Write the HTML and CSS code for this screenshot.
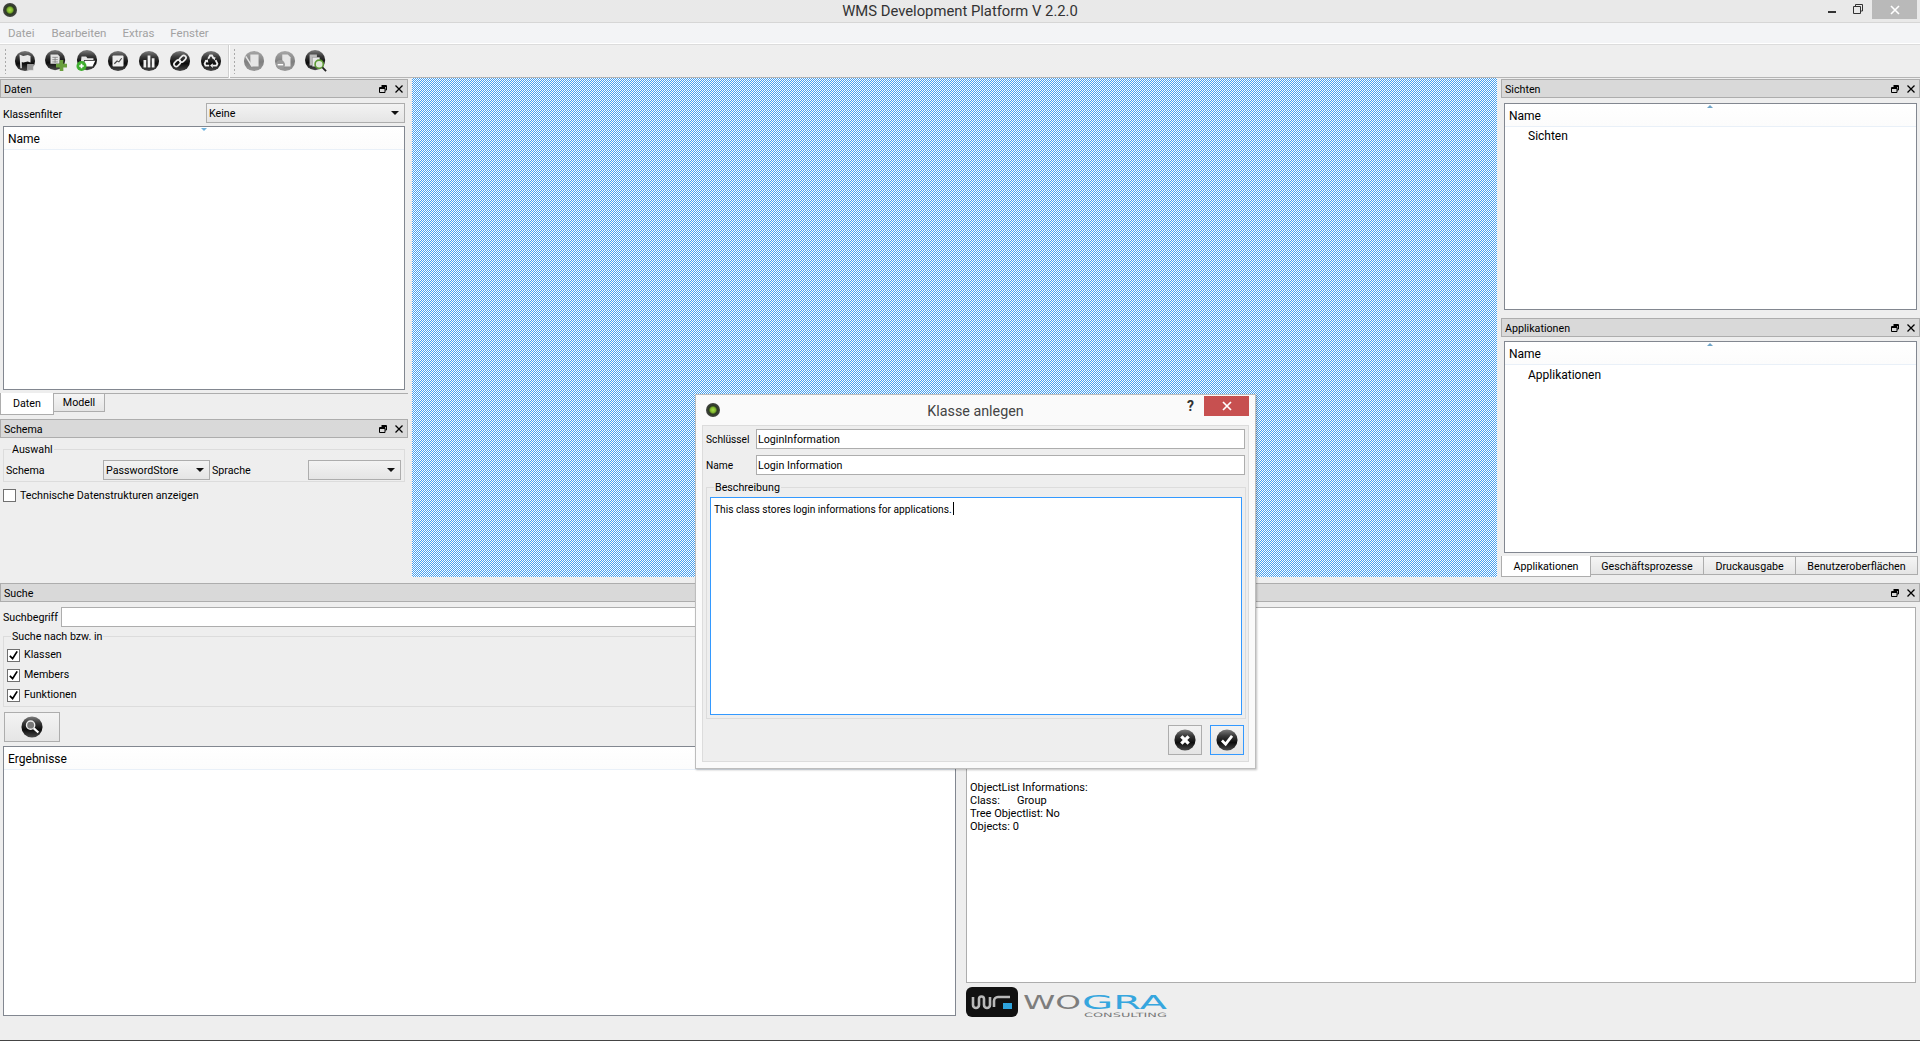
FILE: index.html
```html
<!DOCTYPE html>
<html lang="de">
<head>
<meta charset="utf-8">
<title>WMS Development Platform V 2.2.0</title>
<link rel="stylesheet" href="styles.css">
</head>
<body>
<svg class="defs" width="0" height="0" aria-hidden="true">
  <defs>
    <linearGradient id="ball" x1="0" y1="0" x2="0" y2="1">
      <stop offset="0" stop-color="#7d7d7d"/><stop offset=".3" stop-color="#3a3a3a"/><stop offset=".62" stop-color="#0c0c0c"/><stop offset="1" stop-color="#4a4a4a"/>
    </linearGradient>
    <linearGradient id="ballOff" x1="0" y1="0" x2="0" y2="1">
      <stop offset="0" stop-color="#a8a8a8"/><stop offset=".55" stop-color="#7f7f7f"/><stop offset="1" stop-color="#9a9a9a"/>
    </linearGradient>
    <radialGradient id="led" cx=".5" cy=".5" r=".5">
      <stop offset="0" stop-color="#a8e04a"/><stop offset=".38" stop-color="#7fb52d"/><stop offset=".6" stop-color="#2c3a22"/><stop offset="1" stop-color="#444"/>
    </radialGradient>
    <symbol id="i-flag" viewBox="0 0 24 24"><circle cx="12" cy="12" r="11" fill="url(#ball)"/><path d="M6 5l4 1.500 5-1 3 1v7l-3-1-5 1-1.500-.5V20H7z" fill="#e8e8e8"/><rect x="15" y="16" width="6" height="6" fill="#9a9a9a" stroke="#ddd" stroke-width=".6"/></symbol>
    <symbol id="i-newclass" viewBox="0 0 24 24"><circle cx="11" cy="11" r="11" fill="url(#ball)"/><path d="M6 5h8l2 2v8H6z" fill="#e4e4e4"/><path d="M8 8h6M8 10.500h6M8 13h6M11 8v6" stroke="#777" stroke-width=".8"/><path d="M16 11h4v4h4v4h-4v4h-4v-4h-4v-4h4z" fill="#6a9f3e"/></symbol>
    <symbol id="i-open" viewBox="0 0 24 24"><circle cx="12" cy="11" r="11" fill="url(#ball)"/><path d="M6 7h5l1.500 2H19v2H9l-2 5H5z" fill="#e6e6e6"/><path d="M9.500 11.800H21L18 18H7.500z" fill="#fff"/><circle cx="6" cy="17.500" r="5.500" fill="#3fae2f"/><path d="M3.500 17.500h5M6 15v5" stroke="#fff" stroke-width="1.800"/></symbol>
    <symbol id="i-chart" viewBox="0 0 24 24"><circle cx="12" cy="12" r="11" fill="url(#ball)"/><rect x="6" y="6" width="12" height="12" rx="1" fill="#eee"/><path d="M8 15l3-3 2 1 3-4" fill="none" stroke="#444" stroke-width="1.200"/></symbol>
    <symbol id="i-bars" viewBox="0 0 24 24"><circle cx="12" cy="12" r="11" fill="url(#ball)"/><path d="M6 11h3v8H6zM10.500 6h3v13h-3zM15 9h3v10h-3z" fill="#f0f0f0"/></symbol>
    <symbol id="i-link" viewBox="0 0 24 24"><circle cx="12" cy="12" r="11" fill="url(#ball)"/><g fill="none" stroke="#eee" stroke-width="1.800"><rect x="5" y="12" width="8" height="5" rx="2.500" transform="rotate(-45 9 14.500)"/><rect x="11" y="7" width="8" height="5" rx="2.500" transform="rotate(-45 15 9.500)"/></g></symbol>
    <symbol id="i-recycle" viewBox="0 0 24 24"><circle cx="12" cy="12" r="11" fill="url(#ball)"/><g fill="none" stroke="#eee" stroke-width="2"><path d="M9 9.500l2-3.500h2l2 3.500"/><path d="M17 11l2 4-1 2h-4"/><path d="M10 17H6l-1-2 2-4"/></g><path d="M13 8l4 0-1 3.500zM14 14.500v5l-3-2.500zM5 12l3.500-2 .5 4z" fill="#eee"/></symbol>
    <symbol id="i-note" viewBox="0 0 24 24"><circle cx="12" cy="12" r="11" fill="url(#ballOff)"/><path d="M8 5h9v13H10l-2-2z" fill="#e6e6e6"/><path d="M3 7l7 11" stroke="#e6e6e6" stroke-width="1.600"/></symbol>
    <symbol id="i-noteminus" viewBox="0 0 24 24"><circle cx="12" cy="12" r="11" fill="url(#ballOff)"/><path d="M9 5h6l3 3v10H9z" fill="#e6e6e6"/><circle cx="7" cy="16" r="5" fill="#9a9a9a"/><path d="M4 16h6" stroke="#fff" stroke-width="1.600"/></symbol>
    <symbol id="i-copyfind" viewBox="0 0 24 24"><circle cx="11" cy="11" r="11" fill="url(#ball)"/><path d="M5 5h8v3H8v9H5z" fill="#bbb"/><path d="M8 8h8v10H8z" fill="#e8e8e8"/><circle cx="15.500" cy="15.500" r="4.500" fill="#dfe8d8" stroke="#5d9a35" stroke-width="1.800"/><path d="M19 19l4 4" stroke="#222" stroke-width="2"/></symbol>
    <symbol id="i-search" viewBox="0 0 24 24"><circle cx="12" cy="12" r="11.500" fill="url(#ball)"/><circle cx="10.500" cy="10" r="4.500" fill="#777" stroke="#eee" stroke-width="1.500"/><path d="M14 13.500l5 4.500" stroke="#fff" stroke-width="2.400"/></symbol>
    <symbol id="i-cancel" viewBox="0 0 24 24"><circle cx="12" cy="12" r="11.500" fill="url(#ball)"/><path d="M8 8l8 8M16 8l-8 8" stroke="#fff" stroke-width="3.600"/></symbol>
    <symbol id="i-ok" viewBox="0 0 24 24"><circle cx="12" cy="12" r="11.500" fill="url(#ball)"/><path d="M6.500 12.500l4 4 7-9" fill="none" stroke="#fff" stroke-width="3"/></symbol>
    <symbol id="i-led" viewBox="0 0 14 14"><circle cx="7" cy="7" r="7" fill="url(#led)"/></symbol>
    <symbol id="i-float" viewBox="0 0 8 8"><path d="M2.500.5h5v4.500H6M.5 2.500h5.500v5H.5zM.5 3.500h5.500M2.500 1.500h5" fill="none" stroke="#000" stroke-width="1"/></symbol>
    <symbol id="i-close" viewBox="0 0 8 8"><path d="M.5.5l7 7M7.500.5l-7 7" stroke="#000" stroke-width="1.300"/></symbol>
    <symbol id="i-check" viewBox="0 0 12 12"><path d="M2 6.500l3 3 5-8" fill="none" stroke="#000" stroke-width="1.900"/></symbol>
  </defs>
</svg>

<div class="app">
  <header class="titlebar">
    <svg class="led"><use href="#i-led"/></svg>
    <span class="title-text">WMS Development Platform V 2.2.0</span>
    <div class="win-controls">
      <span class="win-min"></span>
      <svg class="win-restore" viewBox="0 0 10 10"><path d="M2.500 2.500V.5h7v6.500H7.500M.5 2.500h7v7h-7z" fill="none" stroke="#333"/></svg>
      <span class="win-close"><svg class="win-x" viewBox="0 0 10 10"><path d="M1 1l8 8M9 1l-8 8" stroke="#fff" stroke-width="1.600"/></svg></span>
    </div>
  </header>

  <nav class="menubar">
    <span class="menu m1">Datei</span><span class="menu m2">Bearbeiten</span><span class="menu m3">Extras</span><span class="menu m4">Fenster</span>
  </nav>

  <div class="toolbar">
    <span class="grip"></span>
    <div class="tool-group">
      <svg class="tool"><use href="#i-flag"/></svg>
      <svg class="tool"><use href="#i-newclass"/></svg>
      <svg class="tool"><use href="#i-open"/></svg>
      <svg class="tool"><use href="#i-chart"/></svg>
      <svg class="tool"><use href="#i-bars"/></svg>
      <svg class="tool"><use href="#i-link"/></svg>
      <svg class="tool"><use href="#i-recycle"/></svg>
    </div>
    <span class="tool-sep"></span>
    <span class="grip"></span>
    <div class="tool-group">
      <svg class="tool"><use href="#i-note"/></svg>
      <svg class="tool"><use href="#i-noteminus"/></svg>
      <svg class="tool"><use href="#i-copyfind"/></svg>
    </div>
  </div>

  <main class="top">
    <aside class="left-col">
      <div class="dock-head"><span>Daten</span><span class="dock-btns"><svg class="dock-ico"><use href="#i-float"/></svg><svg class="dock-ico"><use href="#i-close"/></svg></span></div>
      <div class="filter-row">
        <label class="filter-label">Klassenfilter</label>
        <div class="combo combo-filter"><span>Keine</span><i class="arrow"></i></div>
      </div>
      <div class="tree tree-daten">
        <div class="tree-head"><span>Name</span><i class="sort sort-down"></i></div>
      </div>
      <div class="tabbar tabs-left">
        <span class="tab tab-active tab-daten">Daten</span><span class="tab tab-modell">Modell</span>
      </div>
      <div class="dock-head schema-head"><span>Schema</span><span class="dock-btns"><svg class="dock-ico"><use href="#i-float"/></svg><svg class="dock-ico"><use href="#i-close"/></svg></span></div>
      <fieldset class="group group-auswahl">
        <legend>Auswahl</legend>
        <div class="schema-row">
          <span class="lbl-schema">Schema</span>
          <div class="combo combo-schema"><span>PasswordStore</span><i class="arrow"></i></div>
          <span class="lbl-sprache">Sprache</span>
          <div class="combo combo-sprache"><span></span><i class="arrow"></i></div>
        </div>
      </fieldset>
      <label class="check check-tech"><span class="box"></span>Technische Datenstrukturen anzeigen</label>
    </aside>

    <section class="mdi"></section>

    <aside class="right-col">
      <div class="dock-head"><span>Sichten</span><span class="dock-btns"><svg class="dock-ico"><use href="#i-float"/></svg><svg class="dock-ico"><use href="#i-close"/></svg></span></div>
      <div class="tree tree-sichten">
        <div class="tree-head"><span>Name</span><i class="sort sort-up"></i></div>
        <div class="tree-item item-sichten">Sichten</div>
      </div>
      <div class="dock-head apps-head"><span>Applikationen</span><span class="dock-btns"><svg class="dock-ico"><use href="#i-float"/></svg><svg class="dock-ico"><use href="#i-close"/></svg></span></div>
      <div class="tree tree-apps">
        <div class="tree-head"><span>Name</span><i class="sort sort-up"></i></div>
        <div class="tree-item">Applikationen</div>
      </div>
      <div class="tabs-right">
        <span class="tab tab-active tr1">Applikationen</span><span class="tab tr2">Geschäftsprozesse</span><span class="tab tr3">Druckausgabe</span><span class="tab tr4">Benutzeroberflächen</span>
      </div>
    </aside>
  </main>

  <section class="search-dock">
    <div class="dock-head"><span>Suche</span><span class="dock-btns"><svg class="dock-ico"><use href="#i-float"/></svg><svg class="dock-ico"><use href="#i-close"/></svg></span></div>
    <div class="search-body">
      <div class="search-left">
        <div class="term-row"><span class="term-label">Suchbegriff</span><div class="input term-input"></div></div>
        <fieldset class="group group-search">
          <legend>Suche nach bzw. in</legend>
          <label class="check"><span class="box"><svg class="tick"><use href="#i-check"/></svg></span>Klassen</label>
          <label class="check"><span class="box"><svg class="tick"><use href="#i-check"/></svg></span>Members</label>
          <label class="check"><span class="box"><svg class="tick"><use href="#i-check"/></svg></span>Funktionen</label>
        </fieldset>
        <button class="btn btn-search" type="button"><svg class="btn-ico"><use href="#i-search"/></svg></button>
        <div class="tree tree-results"><div class="tree-head"><span>Ergebnisse</span></div></div>
      </div>
      <div class="search-right">
        <div class="info-pane">
          <div>ObjectList Informations:</div>
          <div class="info-class"><span class="info-key">Class:</span>Group</div>
          <div>Tree Objectlist: No</div>
          <div>Objects: 0</div>
        </div>
        <div class="logo">
          <svg class="logo-mark" viewBox="0 0 52 30"><rect width="52" height="30" rx="6" fill="#111"/><path d="M7 10v8a3 3 0 0 0 6 0v-6a2.500 2.500 0 0 1 5 0v6a3 3 0 0 0 6 0v-8M28 20v-6a4 4 0 0 1 4-4h12" fill="none" stroke="#b9b9b9" stroke-width="2.600"/><rect x="37" y="16" width="9" height="6" fill="#2ea3dc"/></svg>
          <svg class="logo-word" viewBox="0 0 150 30">
            <text class="lw-gray" x="2" y="22" textLength="58" lengthAdjust="spacingAndGlyphs">WO</text>
            <text class="lw-blue" x="61" y="22" textLength="85" lengthAdjust="spacingAndGlyphs">GRA</text>
            <text class="lw-sub" x="63" y="30" textLength="83" lengthAdjust="spacingAndGlyphs">CONSULTING</text>
          </svg>
        </div>
      </div>
    </div>
  </section>
  <div class="bottom-line"></div>
</div>

<div class="dialog">
  <div class="dlg-title">
    <svg class="led dlg-led"><use href="#i-led"/></svg>
    <span class="dlg-caption">Klasse anlegen</span>
    <span class="dlg-help">?</span>
    <span class="dlg-close"><svg class="win-x" viewBox="0 0 10 10"><path d="M1 1l8 8M9 1l-8 8" stroke="#fff" stroke-width="1.700"/></svg></span>
  </div>
  <div class="dlg-client">
    <div class="form-row"><span class="form-label">Schlüssel</span><div class="input form-input">LoginInformation</div></div>
    <div class="form-row"><span class="form-label">Name</span><div class="input form-input">Login Information</div></div>
    <fieldset class="group group-desc">
      <legend>Beschreibung</legend>
      <div class="textarea">This class stores login informations for applications.<i class="caret"></i></div>
    </fieldset>
    <div class="dlg-actions">
      <button class="btn btn-dlg" type="button"><svg class="btn-ico"><use href="#i-cancel"/></svg></button>
      <button class="btn btn-dlg btn-default" type="button"><svg class="btn-ico"><use href="#i-ok"/></svg></button>
    </div>
  </div>
</div>
</body>
</html>
```

FILE: styles.css
```css
* { box-sizing: border-box; }
html, body { margin: 0; height: 100%; overflow: hidden; }
body { font-family: Roboto, "Noto Sans", sans-serif; font-size: 10.700px; color: #000; background: #eee; position: relative; }
.defs { position: absolute; }
.app { width: 1920px; height: 1041px; display: flex; flex-direction: column; }

/* window chrome */
.titlebar { height: 23px; flex: none; background: #e9e9e9; border-bottom: 1px solid #d6d6d6; position: relative; display: flex; align-items: flex-start; }
.led { width: 14px; height: 14px; margin: 3px 0 0 3px; }
.title-text { position: absolute; left: 0; right: 0; top: 1px; text-align: center; font-size: 14.800px; line-height: 20px; color: #333; }
.win-controls { position: absolute; right: 3px; top: 0; display: flex; align-items: flex-start; }
.win-min { width: 8px; height: 2px; background: #333; margin: 11px 17px 0 0; }
.win-restore { width: 10px; height: 10px; margin: 4px 9px 0 0; }
.win-close { width: 45px; height: 19px; background: #b9b9b9; display: flex; align-items: center; justify-content: center; }
.win-x { width: 10px; height: 10px; }

.menubar { height: 21px; flex: none; background: #f3f4f6; border-bottom: 1px solid #fff; display: flex; align-items: center; color: #a2a2a2; line-height: 20px; font-size: 11.500px; }
.m1 { margin-left: 8px; }
.m2 { margin-left: 17px; }
.m3 { margin-left: 16px; }
.m4 { margin-left: 16px; }

.toolbar { height: 34px; flex: none; background: #eee; border-top: 1px solid #dcdcdc; border-bottom: 1px solid #b5b5b5; display: flex; align-items: center; }
.grip { width: 3px; height: 26px; margin-left: 4px; background-image: radial-gradient(circle, #aaa 1px, transparent 1px); background-size: 3px 4px; }
.tool-group { display: flex; gap: 9px; margin-left: 7px; }
.tool { width: 22px; height: 22px; overflow: visible; }
.tool-sep { width: 1px; height: 33px; background: #d0d0d0; box-shadow: 1px 0 0 #fff; margin-left: 6px; }

/* main region */
.top { height: 505px; flex: none; display: flex; }
.left-col { width: 412px; flex: none; padding: 1px 4px 0 0; }
.mdi { width: 1085px; flex: none; height: 499px; background-color: #fff; background-image: conic-gradient(#45a0f0 25%, #fff 0 50%, #45a0f0 0 75%, #fff 0); background-size: 2px 2px; }
.right-col { flex: 1; padding: 1px 0 0 4px; }

.dock-head { height: 19px; background: #d9d9d9; border: 1px solid #adadad; display: flex; align-items: center; justify-content: space-between; padding: 0 0 0 3px; line-height: 17px; }
.dock-head > span:first-child { padding-top: 2px; }
.dock-btns { display: flex; gap: 8px; margin-right: 4px; }
.dock-ico { width: 8px; height: 8px; }

.filter-row { height: 28px; display: flex; align-items: center; justify-content: space-between; padding: 5px 3px 3px 3px; }
.filter-label { padding-top: 2px; }
.combo { height: 20px; border: 1px solid #adadad; background: linear-gradient(#f3f3f3, #e5e5e5); display: flex; align-items: center; justify-content: space-between; padding: 0 5px 0 2px; line-height: 18px; }
.combo > span { padding-top: 2px; }
.combo-filter { width: 199px; }
.arrow { width: 0; height: 0; border-left: 4px solid transparent; border-right: 4px solid transparent; border-top: 4px solid #111; margin-top: -1px; }

.tree { background: #fff; border: 1px solid #828790; position: relative; }
.tree-head { height: 23px; background: linear-gradient(#fff, #fcfcfc); border-bottom: 1px solid #e9f0f8; padding: 3px 0 0 4px; line-height: 19px; font-size: 12px; position: relative; }
.tree-item { padding: 1px 0 0 23px; line-height: 19px; font-size: 12px; }
.item-sichten { margin-top: -1px; }
.sort { position: absolute; top: 1px; width: 0; height: 0; border-left: 3.500px solid transparent; border-right: 3.500px solid transparent; }
.sort-down { left: 197px; border-top: 3px solid #6fb2de; }
.sort-up { left: 202px; border-bottom: 3px solid #6fa4c8; }
.tree-daten { width: 402px; height: 264px; margin-left: 3px; }

.tabbar { height: 30px; margin-top: 3px; border-top: 1px solid #adadad; display: flex; align-items: flex-start; width: 408px; }
.tab { background: linear-gradient(#f5f5f5, #e5e5e5); border: 1px solid #adadad; display: inline-flex; align-items: center; justify-content: center; height: 18px; line-height: 16px; }
.tab-active { background: #fff; height: 21px; padding-top: 1px; }
.tab-daten { width: 54px; border-top: 0; margin-top: -1px; height: 22px; }
.tab-modell { width: 51px; margin-top: -1px; border-left: 0; height: 19px; }
.schema-head { margin-top: -4px; }

.group { border: 1px solid #dcdcdc; margin: 0; padding: 0; min-width: 0; position: relative; }
.group legend { margin-left: 7px; padding: 0 1px; line-height: 16px; height: 14px; }
.group-auswahl { margin: 4px 3px 0 3px; width: 402px; height: 40px; }
.schema-row { display: flex; align-items: center; height: 20px; margin-top: 4px; }
.lbl-schema { width: 99px; padding: 1px 0 0 2px; }
.combo-schema { width: 107px; }
.lbl-sprache { width: 98px; padding: 1px 0 0 2px; }
.combo-sprache { width: 93px; }

.check { display: flex; align-items: center; gap: 4px; height: 20px; line-height: 14px; }
.box { width: 13px; height: 13px; border: 1px solid #707070; background: #fff; display: flex; align-items: center; justify-content: center; flex: none; }
.tick { width: 11px; height: 11px; }
.check-tech { margin: 4px 0 0 3px; }
.check-tech .box { margin-top: -2px; }

/* Tab strip right */
.tree-sichten { width: 413px; height: 207px; margin: 5px 0 0 3px; }
.apps-head { margin-top: 8px; }
.tree-apps { width: 413px; height: 212px; margin: 4px 0 0 3px; }
.tabs-right { display: flex; align-items: flex-start; margin-top: 3px; }
.tabs-right .tab { height: 19px; padding-top: 2px; }
.tabs-right .tab-active { height: 21px; border-top: 0; }
.tr1 { width: 90px; }
.tr2 { width: 113px; border-left: 0; }
.tr3 { width: 92px; border-left: 0; }
.tr4 { width: 122px; border-left: 0; }

/* Search */
.search-dock { flex: 1; display: flex; flex-direction: column; }
.search-body { display: flex; flex: 1; }
.search-left { width: 966px; flex: none; padding: 5px 10px 0 3px; }
.search-right { flex: 1; padding: 5px 4px 0 0; display: flex; flex-direction: column; }

.term-row { display: flex; align-items: center; height: 20px; }
.term-label { width: 58px; flex: none; }
.input { height: 20px; background: #fff; border: 1px solid #adadad; padding: 1px 0 0 1px; line-height: 18px; }
.term-input { flex: 1; }
.group-search { margin-top: 2px; height: 78px; padding: 2px 0 0 3px; }
.group-search legend { margin-left: 4px; }
.btn { background: linear-gradient(#f3f3f3, #e5e5e5); border: 1px solid #adadad; padding: 0; display: flex; align-items: center; justify-content: center; }
.btn-search { width: 56px; height: 30px; margin: 5px 0 0 1px; }
.btn-ico { width: 22px; height: 22px; }
.tree-results { height: 270px; margin-top: 4px; width: 953px; }

.info-pane { height: 376px; background: #fff; border: 1px solid #adadad; padding: 174px 0 0 3px; line-height: 12.900px; font-size: 11px; }
.info-key { display: inline-block; width: 47px; }
.logo { display: flex; margin-top: 4px; height: 30px; }
.logo-mark { width: 52px; height: 30px; }
.logo-word { width: 150px; height: 30px; margin-left: 3px; overflow: visible; }
.lw-gray, .lw-blue { font-family: "DejaVu Sans", sans-serif; font-size: 20px; }
.lw-gray { fill: #7d7d7d; }
.lw-blue { fill: #36a6de; }
.lw-sub { font-family: "DejaVu Sans", sans-serif; font-size: 6px; fill: #777; }
.bottom-line { height: 1px; background: #444; flex: none; }

/* Dialog */
.dialog { position: absolute; left: 695px; top: 394px; width: 561px; height: 375px; background: #fafafa; border: 1px solid #bdbdbd; box-shadow: 1px 1px 2px rgba(0,0,0,.25); display: flex; flex-direction: column; padding: 0 6px 6px 6px; }
.dlg-title { height: 30px; flex: none; position: relative; }
.dlg-led { position: absolute; left: 4px; top: 8px; margin: 0; }
.dlg-caption { position: absolute; left: 0; right: 0; top: 5px; text-align: center; font-size: 14.300px; line-height: 22px; color: #444; }
.dlg-help { position: absolute; left: 485px; top: 1px; font-size: 14px; font-weight: 700; line-height: 20px; color: #333; }
.dlg-close { position: absolute; right: 0; top: 1px; width: 45px; height: 20px; background: #c75050; display: flex; align-items: center; justify-content: center; }
.dlg-client { flex: 1; background: #eee; border: 1px solid #dcdcdc; padding: 3px 2px 0 3px; }
.form-row { display: flex; align-items: center; height: 20px; margin-bottom: 6px; }
.form-label { width: 50px; flex: none; font-size: 10.200px; padding-top: 1px; }
.form-input { flex: 1; margin-right: 1px; }
.group-desc { margin-top: -1px; width: 540px; height: 239px; padding: 0 3px; }
.group-desc legend { margin-left: 4px; }
.textarea { height: 218px; margin-top: 3px; background: #fff; border: 1px solid #3399ff; padding: 4px 3px; line-height: 16px; width: 532px; font-size: 10.200px; }
.caret { display: inline-block; width: 1px; height: 13px; background: #000; vertical-align: -2px; margin-left: 1px; }
.dlg-actions { display: flex; justify-content: flex-end; gap: 8px; margin-top: 6px; padding-right: 2px; }
.btn-dlg { width: 34px; height: 30px; }
.btn-default { border-color: #3399ff; }
```
